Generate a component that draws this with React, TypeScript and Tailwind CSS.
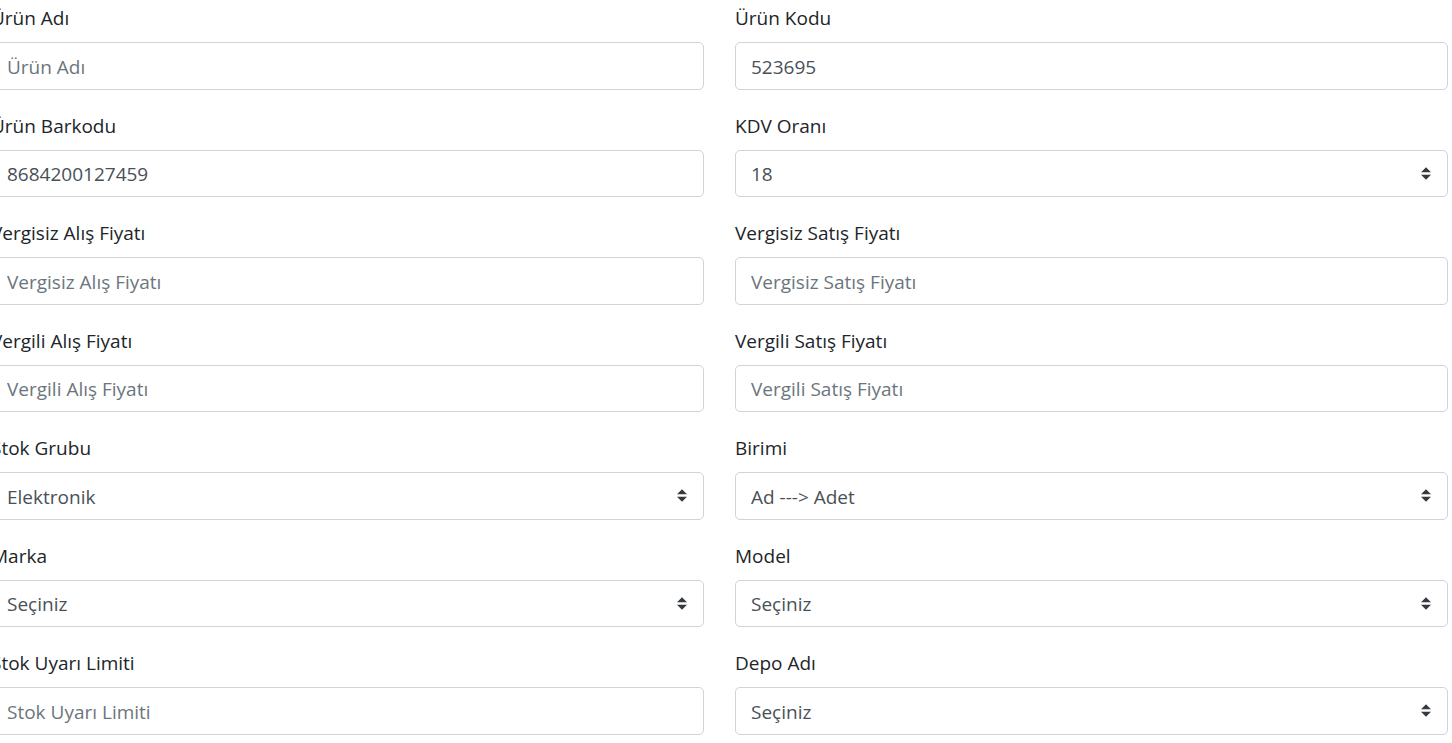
import React from "react";

type Field = {
  label: string;
  kind: "input" | "select";
  value?: string;
  placeholder?: string;
};

const rows: [Field, Field][] = [
  [
    { label: "Ürün Adı", kind: "input", placeholder: "Ürün Adı" },
    { label: "Ürün Kodu", kind: "input", value: "523695" },
  ],
  [
    { label: "Ürün Barkodu", kind: "input", value: "8684200127459" },
    { label: "KDV Oranı", kind: "select", value: "18" },
  ],
  [
    { label: "Vergisiz Alış Fiyatı", kind: "input", placeholder: "Vergisiz Alış Fiyatı" },
    { label: "Vergisiz Satış Fiyatı", kind: "input", placeholder: "Vergisiz Satış Fiyatı" },
  ],
  [
    { label: "Vergili Alış Fiyatı", kind: "input", placeholder: "Vergili Alış Fiyatı" },
    { label: "Vergili Satış Fiyatı", kind: "input", placeholder: "Vergili Satış Fiyatı" },
  ],
  [
    { label: "Stok Grubu", kind: "select", value: "Elektronik" },
    { label: "Birimi", kind: "select", value: "Ad ---> Adet" },
  ],
  [
    { label: "Marka", kind: "select", value: "Seçiniz" },
    { label: "Model", kind: "select", value: "Seçiniz" },
  ],
  [
    { label: "Stok Uyarı Limiti", kind: "input", placeholder: "Stok Uyarı Limiti" },
    { label: "Depo Adı", kind: "select", value: "Seçiniz" },
  ],
];

const SelectArrow = () => (
  <svg width="10" height="13" viewBox="0 0 4 5" className="shrink-0">
    <path d="M2 0L0 2h4zm0 5L0 3h4z" fill="#343a40" />
  </svg>
);

const FormField = ({ field }: { field: Field }) => (
  <div className="mb-[20px]">
    <label className="block h-[30px] leading-[30px] pt-[1px] mb-[10px] text-[#212529]">
      {field.label}
    </label>
    {field.kind === "input" ? (
      <input
        readOnly
        defaultValue={field.value}
        placeholder={field.placeholder}
        className="block w-full h-[47.5px] px-[15px] pt-[2px] border border-[#ced4da] rounded-[5px] bg-white text-[#495057] placeholder:text-[#6c757d] outline-none"
      />
    ) : (
      <div className="flex items-center justify-between w-full h-[47.5px] pl-[15px] pr-[16px] border border-[#ced4da] rounded-[5px] bg-white text-[#495057]">
        <span className="pt-[2px]">{field.value}</span>
        <SelectArrow />
      </div>
    )}
  </div>
);

const App = () => {
  return (
    <div
      className="min-h-screen bg-white overflow-hidden text-[19px]"
      style={{ fontFamily: '"Open Sans", "Noto Sans", sans-serif' }}
    >
      <div className="ml-[-9px] w-[1457px] pt-[2px] grid grid-cols-2 gap-x-[31px]">
        {rows.map(([a, b], i) => (
          <React.Fragment key={i}>
            <FormField field={a} />
            <FormField field={b} />
          </React.Fragment>
        ))}
      </div>
    </div>
  );
};

export default App;
